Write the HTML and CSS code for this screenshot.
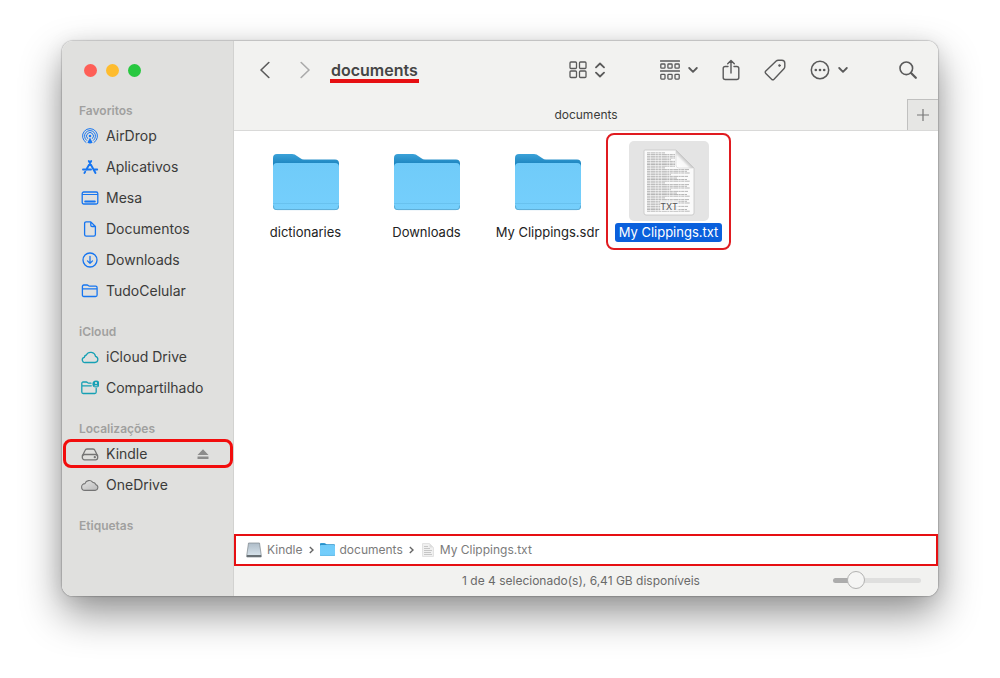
FILE: index.html
```html
<!DOCTYPE html>
<html lang="pt-BR">
<head>
<meta charset="utf-8">
<title>documents</title>
<meta name="viewport" content="width=device-width, initial-scale=1">
<link rel="stylesheet" href="styles.css">
</head>
<body>
<svg class="defs" aria-hidden="true">
  <defs>
    <linearGradient id="folder-back" x1="0" y1="0" x2="0" y2="1"><stop offset="0" stop-color="#3ba2d9"/><stop offset=".2" stop-color="#1a82bd"/></linearGradient>
    <linearGradient id="folder-front" x1="0" y1="0" x2="0" y2="1"><stop offset="0" stop-color="#70cbf9"/><stop offset="1" stop-color="#75cffc"/></linearGradient>
    <linearGradient id="fold" x1="0" y1="1" x2="1" y2="0"><stop offset="0" stop-color="#fff"/><stop offset=".35" stop-color="#f8f8f8"/><stop offset=".5" stop-color="#c4c4c4"/></linearGradient>
    <linearGradient id="disk" x1="0" y1="0" x2="0" y2="1"><stop offset="0" stop-color="#aebcc8"/><stop offset="1" stop-color="#dbe7ef"/></linearGradient>
    <linearGradient id="cloud-fill" x1="0" y1="0" x2="1" y2="1"><stop offset="0" stop-color="#e4e4e3"/><stop offset="1" stop-color="#bababa"/></linearGradient>
    <pattern id="text-lines" width="48" height="15" patternUnits="userSpaceOnUse">
      <path d="M4 .5h40M4 2.200h43M4 3.900h18M4 5.600h42M4 7.300h40M4 9h43M4 10.700h24M4 12.400h41M4 14.100h30" stroke="#8a8a8a" stroke-width=".6" stroke-dasharray="3 .5 5 .4 2 .5"/>
    </pattern>
    <symbol id="folder" viewBox="0 0 66 57">
      <path d="M0 52V4Q0 0 4 0h15q3 0 5 2l3 2q2 1.500 4 1.500h31q4 0 4 4V52q0 4-4 4H4q-4 0-4-4z" fill="url(#folder-back)"/>
      <path d="M0 13q0-4 4-4h58q4 0 4 4v39q0 4-4 4H4q-4 0-4-4z" fill="url(#folder-front)"/>
      <path d="M0 49.500h66" stroke="#5fb8e6" stroke-width=".6"/>
      <path d="M.4 51.500Q.4 55.600 4 55.600h58q3.600 0 3.600-4.100" fill="none" stroke="#5ba9d0" stroke-width=".9"/>
    </symbol>
  </defs>
</svg>

<div class="window">
  <nav class="sidebar" aria-label="Barra lateral">
    <div class="lights">
      <button class="light light-close" aria-label="Fechar"></button>
      <button class="light light-min" aria-label="Minimizar"></button>
      <button class="light light-zoom" aria-label="Ampliar"></button>
    </div>

    <section class="group">
      <h2 class="group-title">Favoritos</h2>
      <a class="place" href="#"><svg class="place-icon blue" viewBox="0 0 18 18"><g stroke-width="1"><path d="M5 15.500A7.500 7.500 0 1 1 13 15.500"/><path d="M5.600 13.400A5.500 5.500 0 1 1 12.400 13.400"/><path d="M6.500 11.500A3.500 3.500 0 1 1 11.500 11.500"/></g><circle cx="9" cy="9" r="1.300" fill="currentColor" stroke="none"/><path d="M9 10.500l2.600 5.300q-2.600 1.200-5.200 0z" fill="currentColor" stroke="none"/></svg>AirDrop</a>
      <a class="place" href="#"><svg class="place-icon blue" viewBox="0 0 18 18"><path stroke-width="1.900" d="M7.800 3l6.700 12M10.200 3L5.200 11.700M4.200 13.800L3.400 15M2 11.500h8M12.800 11.500h3.400"/></svg>Aplicativos</a>
      <a class="place" href="#"><svg class="place-icon blue" viewBox="0 0 18 18"><rect x="1.200" y="3" width="15.600" height="12" rx="1.500"/><path d="M1.500 5.500h15" stroke-width="1"/><path d="M4.200 12.500h9.600" stroke-width="2"/></svg>Mesa</a>
      <a class="place" href="#"><svg class="place-icon blue" viewBox="0 0 18 18"><path d="M9.800 1.900H5.200q-1.600 0-1.600 1.600v11q0 1.600 1.600 1.600h7.600q1.600 0 1.600-1.600V6.500zV5.200q0 1.300 1.300 1.300h3.300"/></svg>Documentos</a>
      <a class="place" href="#"><svg class="place-icon blue" viewBox="0 0 18 18"><circle cx="9" cy="9" r="7"/><path d="M9 5.300v7M6.500 9.900L9 12.400l2.500-2.500"/></svg>Downloads</a>
      <a class="place" href="#"><svg class="place-icon blue" viewBox="0 0 18 18"><path d="M1.400 13V4.500Q1.400 3 2.900 3H6q.8 0 1.300.6t1.300.6h6q1.500 0 1.500 1.500V13q0 1.500-1.500 1.500H2.900Q1.400 14.500 1.400 13zM1.400 6.800h14.700"/></svg>TudoCelular</a>
    </section>

    <section class="group">
      <h2 class="group-title">iCloud</h2>
      <a class="place" href="#"><svg class="place-icon teal" viewBox="0 0 18 18"><path d="M4.300 14.500h9.600a3.100 3.100 0 0 0 .6-6.100A4.900 4.900 0 0 0 5.300 7a2.700 2.700 0 0 0-2 2.400 2.600 2.600 0 0 0 1 5.100z"/></svg>iCloud Drive</a>
      <a class="place" href="#"><svg class="place-icon teal" viewBox="0 0 18 18"><path d="M10 4.200H7.600Q7 4.200 6.500 3.600T5.300 3H2.200Q.8 3 .8 4.500V13q0 1.500 1.400 1.500h11.600q1.400 0 1.400-1.500V9.500M.8 6.800h9.500"/><circle cx="15" cy="5" r="3.600" fill="currentColor" stroke="none"/><circle cx="15" cy="4" r="1.100" fill="#e0e0de" stroke="none"/><path d="M13 7.300q2-2.300 4 0z" fill="#e0e0de" stroke="none"/></svg>Compartilhado</a>
    </section>

    <section class="group">
      <h2 class="group-title">Localizações</h2>
      <div class="place place-marked"><a class="place-link" href="#"><svg class="place-icon gray" viewBox="0 0 18 18"><path d="M1.500 10.800L4 5.500q.6-1.500 2-1.500h6q1.400 0 2 1.500l2.500 5.300"/><rect x="1.300" y="9.500" width="15.400" height="5.300" rx="2.200"/><circle cx="13.800" cy="12.200" r=".5"/></svg>Kindle</a><button class="eject" aria-label="Ejetar"><svg width="12" height="12" viewBox="0 0 12 12" fill="currentColor"><path d="M6 1.200L11.500 7H.5zM.5 8.500h11v2.400H.5z"/></svg></button></div>
      <a class="place" href="#"><svg class="place-icon gray" viewBox="0 0 18 18"><path fill="url(#cloud-fill)" stroke-width="1.100" d="M4 14.400h10.200a2.900 2.900 0 0 0 .8-5.600A4 4 0 0 0 11.600 6.200 4.400 4.400 0 0 0 4 7.600a3.400 3.400 0 0 0 0 6.800z"/></svg>OneDrive</a>
    </section>

    <section class="group">
      <h2 class="group-title">Etiquetas</h2>
    </section>
  </nav>

  <main class="main">
    <header class="toolbar">
      <button class="tool" aria-label="Voltar"><svg width="10" height="18" viewBox="0 0 10 18"><path d="M8.800 1.500L1 9l7.800 7.500"/></svg></button>
      <button class="tool tool-forward" aria-label="Avançar"><svg width="10" height="18" viewBox="0 0 10 18"><path d="M1.200 1.500L9 9l-7.800 7.500"/></svg></button>
      <h1 class="title">documents</h1>
      <div class="tools">
        <button class="tool" aria-label="Visualização"><svg width="18" height="18" viewBox="0 0 18 18"><g stroke-width="1.300"><rect x="1" y="1" width="6.500" height="6.500" rx="1"/><rect x="10.500" y="1" width="6.500" height="6.500" rx="1"/><rect x="1" y="10" width="6.500" height="6.500" rx="1"/><rect x="10.500" y="10" width="6.500" height="6.500" rx="1"/></g></svg><svg width="10" height="16" viewBox="0 0 10 16"><path stroke-width="1.800" d="M1 5.300l4-3.800 4 3.800M1 10.700l4 3.800 4-3.800"/></svg></button>
        <button class="tool tool-group" aria-label="Agrupar"><svg width="20" height="20" viewBox="0 0 20 20"><g stroke-width="1.300"><path d="M.5 1h19M.5 11h19"/><rect x=".8" y="4" width="4.200" height="4.200" rx=".8"/><rect x="7.900" y="4" width="4.200" height="4.200" rx=".8"/><rect x="15" y="4" width="4.200" height="4.200" rx=".8"/><rect x=".8" y="14.300" width="4.200" height="4.800" rx=".8"/><rect x="7.900" y="14.300" width="4.200" height="4.800" rx=".8"/><rect x="15" y="14.300" width="4.200" height="4.800" rx=".8"/></g></svg><svg width="10" height="8" viewBox="0 0 10 8"><path stroke-width="1.800" d="M1.200 2L5 5.800 8.800 2"/></svg></button>
        <button class="tool" aria-label="Compartilhar"><svg width="18" height="22" viewBox="0 0 18 22"><path stroke-width="1.400" d="M6 7.500H3.200q-2 0-2 2v9q0 2 2 2h11.600q2 0 2-2v-9q0-2-2-2H12M9 14V1.500M5.700 4.700L9 1.400l3.300 3.300"/></svg></button>
        <button class="tool" aria-label="Etiquetas"><svg width="22" height="22" viewBox="0 0 22 22"><path stroke-width="1.400" d="M12.200 2Q13 1.200 14.200 1.200h3.600q3 0 3 3v3.400q0 1.300-.9 2.200L10 20.200q-1.200 1.200-2.400 0L1.800 14.400q-1.200-1.200 0-2.400z"/><circle cx="15.500" cy="6.500" r="1" fill="currentColor" stroke-width=".6"/></svg></button>
        <button class="tool" aria-label="Ações"><svg width="20" height="20" viewBox="0 0 20 20"><circle cx="10" cy="10" r="8.700" stroke-width="1.500"/><g fill="currentColor" stroke="none"><circle cx="5.800" cy="10" r="1.300"/><circle cx="10" cy="10" r="1.300"/><circle cx="14.200" cy="10" r="1.300"/></g></svg><svg width="10" height="8" viewBox="0 0 10 8"><path stroke-width="1.800" d="M1.200 2L5 5.800 8.800 2"/></svg></button>
        <button class="tool tool-search" aria-label="Buscar"><svg width="18" height="18" viewBox="0 0 18 18"><circle cx="7.300" cy="7.300" r="6.300" stroke-width="1.600"/><path d="M12 12l4.800 4.800" stroke-width="2.200"/></svg></button>
      </div>
    </header>

    <div class="tabs">
      <button class="tab">documents</button>
      <button class="tab-add" aria-label="Nova aba"><svg width="12" height="12" viewBox="0 0 12 12"><path d="M6 0v12M0 6h12"/></svg></button>
    </div>

    <div class="files">
      <button class="file"><span class="thumb"><svg width="66" height="57"><use href="#folder"/></svg></span><span class="name">dictionaries</span></button>
      <button class="file"><span class="thumb"><svg width="66" height="57"><use href="#folder"/></svg></span><span class="name">Downloads</span></button>
      <button class="file"><span class="thumb"><svg width="66" height="57"><use href="#folder"/></svg></span><span class="name">My Clippings.sdr</span></button>
      <button class="file file-selected"><span class="thumb"><svg class="paper" width="52" height="67" viewBox="0 0 52 67"><path d="M2 1h31l18 18v45q0 2-2 2H3q-2 0-2-2V2q0-1 1-1z" fill="#fafafa" stroke="#c4c4c4" stroke-width=".8"/><path d="M4 3h28v16h16v44H4z" fill="url(#text-lines)"/><path d="M33 1l18 18H36q-3 0-3-3z" fill="url(#fold)"/><path d="M33 1v15q0 3 3 3h15" fill="none" stroke="#d0d0d0" stroke-width=".6"/><rect x="17" y="52" width="18" height="10" fill="#fafafa" opacity=".7"/><text class="paper-type" x="26" y="61" text-anchor="middle">TXT</text></svg></span><span class="name">My Clippings.txt</span></button>
    </div>

    <nav class="path" aria-label="Caminho">
      <a class="crumb" href="#"><svg width="16" height="16" viewBox="0 0 16 16"><path d="M2.500 1h11l1.700 12v2H.8v-2z" fill="url(#disk)" stroke="#7e868c" stroke-width=".7"/><path d="M.8 13h14.400v2H.8z" fill="#687075"/></svg>Kindle</a>
      <svg class="arrow" width="5" height="8" viewBox="0 0 5 8"><path d="M.8 1L4 4 .8 7"/></svg>
      <a class="crumb" href="#"><svg width="15" height="13"><use href="#folder"/></svg>documents</a>
      <svg class="arrow" width="5" height="8" viewBox="0 0 5 8"><path d="M.8 1L4 4 .8 7"/></svg>
      <a class="crumb crumb-file" href="#"><svg width="12" height="14" viewBox="0 0 12 14"><path d="M.5.500h7l4 4v9H.5z" fill="#f0f0f0" stroke="#e2e2e2"/><path d="M2 3.500h4M2 5.500h6M2 7.500h8M2 9.500h7M2 11.500h8" stroke="#c6c6c6"/><path d="M7.500.500v4h4z" fill="#ddd"/></svg>My Clippings.txt</a>
    </nav>

    <footer class="status">
      <span class="status-text">1 de 4 selecionado(s), 6,41 GB disponíveis</span>
      <input class="zoom" type="range" min="0" max="100" value="20" aria-label="Tamanho dos ícones">
    </footer>
  </main>
</div>
</body>
</html>
```
FILE: styles.css
```css
* {
  box-sizing: border-box;
}

body {
  margin: 0;
  min-height: 100vh;
  padding: 41px 62px 82px;
  display: flex;
  background: #fff;
  color: #3b3b3a;
  font-family: Inter, "Liberation Sans", sans-serif;
  font-size: 14px;
}

button {
  margin: 0;
  padding: 0;
  border: 0;
  background: none;
  color: inherit;
  font: inherit;
}

a {
  color: inherit;
  text-decoration: none;
}

svg {
  display: block;
  flex: none;
}

.defs {
  position: absolute;
  width: 0;
  height: 0;
}

.window {
  flex: 1;
  min-width: 0;
  display: flex;
  border-radius: 11px;
  background: #fff;
  box-shadow: 0 0 1px 1px rgba(0, 0, 0, .16), 0 18px 40px rgba(0, 0, 0, .42), 0 2px 20px rgba(0, 0, 0, .08);
}

/* Sidebar */

.sidebar {
  flex: none;
  width: 172px;
  border-right: 1px solid #d2d2d0;
  border-radius: 11px 0 0 11px;
  background: #e0e0de;
}

.lights {
  display: flex;
  gap: 9px;
  padding: 23px 0 25px 22px;
}

.light {
  width: 13px;
  height: 13px;
  border-radius: 50%;
}

.light-close { background: #fe5f57; }
.light-min { background: #febc2e; }
.light-zoom { background: #28c840; }

.group {
  margin-bottom: 17px;
}

.group-title {
  margin: 0;
  padding-left: 17px;
  color: #a0a09f;
  font-size: 12px;
  font-weight: 600;
  line-height: 18px;
}

.place,
.place-link {
  display: flex;
  align-items: center;
  gap: 7px;
  height: 31px;
}

.place {
  padding-left: 19px;
}

.place-icon {
  width: 18px;
  height: 18px;
  fill: none;
  stroke: currentColor;
  stroke-width: 1.3;
  stroke-linecap: round;
  stroke-linejoin: round;
}

.blue { color: #1675f0; }
.teal { color: #16a0b4; }
.gray { color: #747474; }

.place-marked {
  position: relative;
  justify-content: space-between;
  padding-right: 24px;
}

.place-marked::after {
  content: "";
  position: absolute;
  inset: 1px 0 1px 1px;
  border: 3px solid #f20d0d;
  border-radius: 8px;
  pointer-events: none;
}

.eject {
  color: #8c8c8b;
}

/* Main column */

.main {
  flex: 1;
  min-width: 0;
  display: flex;
  flex-direction: column;
}

.toolbar {
  display: flex;
  align-items: center;
  height: 58px;
  padding: 0 21px 0 26px;
  border-top-right-radius: 11px;
  background: #f2f2f0;
}

.tool {
  display: flex;
  align-items: center;
  gap: 8px;
  color: #5a5a5a;
}

.tool svg {
  fill: none;
  stroke: currentColor;
  stroke-width: 1.6;
  stroke-linecap: round;
  stroke-linejoin: round;
}

.tool-forward {
  margin-left: 30px;
  color: #aaa;
}

.title {
  margin: 3px 0 0 20px;
  padding: 0 1px;
  border-bottom: 4px solid #e60f12;
  color: #454545;
  font-size: 16px;
  font-weight: 600;
  line-height: 18px;
}

.tools {
  display: flex;
  align-items: center;
  gap: 24px;
  margin-left: auto;
}

.tool-group { margin-left: 31px; }
.tool-search { margin-left: 27px; }

.tabs {
  display: grid;
  grid-template-columns: 31px 1fr 31px;
  height: 32px;
  border-bottom: 1px solid #d9d9d8;
  background: #f2f2f0;
}

.tab {
  grid-column: 2;
  font-size: 12px;
}

.tab-add {
  display: grid;
  place-items: center;
  border-top: 1px solid #c0c0bf;
  border-left: 1px solid #c0c0bf;
  background: #e6e6e4;
}

.tab-add svg {
  stroke: #777;
  stroke-width: 1.2;
}

.files {
  flex: 1;
  display: grid;
  grid-template-columns: repeat(auto-fill, 121px);
  align-content: start;
  padding: 2px 0 0 11px;
}

.file {
  display: flex;
  flex-direction: column;
  align-items: center;
  gap: 2px;
  height: 117px;
  padding-top: 8px;
  color: #222;
  font-size: 13px;
  white-space: nowrap;
}

.thumb {
  display: grid;
  place-items: center;
  width: 80px;
  height: 80px;
  padding-top: 2px;
  border-radius: 5px;
}

.name {
  padding: 0 4px;
  border-radius: 3px;
  line-height: 19px;
}

.file-selected {
  position: relative;
}

.file-selected::after {
  content: "";
  position: absolute;
  inset: 0 -2px;
  border: 2px solid #e01b20;
  border-radius: 8px;
}

.file-selected .thumb {
  background: #e4e4e4;
}

.file-selected .name {
  background: #0a60dc;
  color: #fff;
}

.paper-type {
  fill: #555;
  font-size: 9px;
}

.path {
  display: flex;
  align-items: center;
  height: 32px;
  gap: 6px;
  padding: 0 0 1px 10px;
  border: 2px solid #e60f12;
  color: #7b7b7b;
  font-size: 12px;
}

.crumb {
  display: flex;
  align-items: center;
  gap: 5px;
}

.crumb-file {
  gap: 6px;
  padding-left: 2px;
}

.arrow {
  fill: none;
  stroke: #666;
  stroke-width: 1.4;
}

.status {
  display: grid;
  grid-template-columns: 88px 1fr 88px;
  align-items: center;
  height: 30px;
  padding: 0 17px 1px 7px;
  border-bottom-right-radius: 11px;
  background: #f2f2f0;
  color: #6a6a6a;
  font-size: 12px;
}

.status-text {
  grid-column: 2;
  text-align: center;
}

.zoom {
  appearance: none;
  width: 100%;
  height: 18px;
  margin: 0;
  background: none;
}

.zoom::-webkit-slider-runnable-track {
  height: 5px;
  border-radius: 3px;
  background: linear-gradient(to right, #acacac 25%, #dfdfde 25%);
}

.zoom::-webkit-slider-thumb {
  appearance: none;
  width: 18px;
  height: 18px;
  margin-top: -7px;
  border: 1px solid #b2b2b1;
  border-radius: 50%;
  background: #f5f5f4;
}
```
